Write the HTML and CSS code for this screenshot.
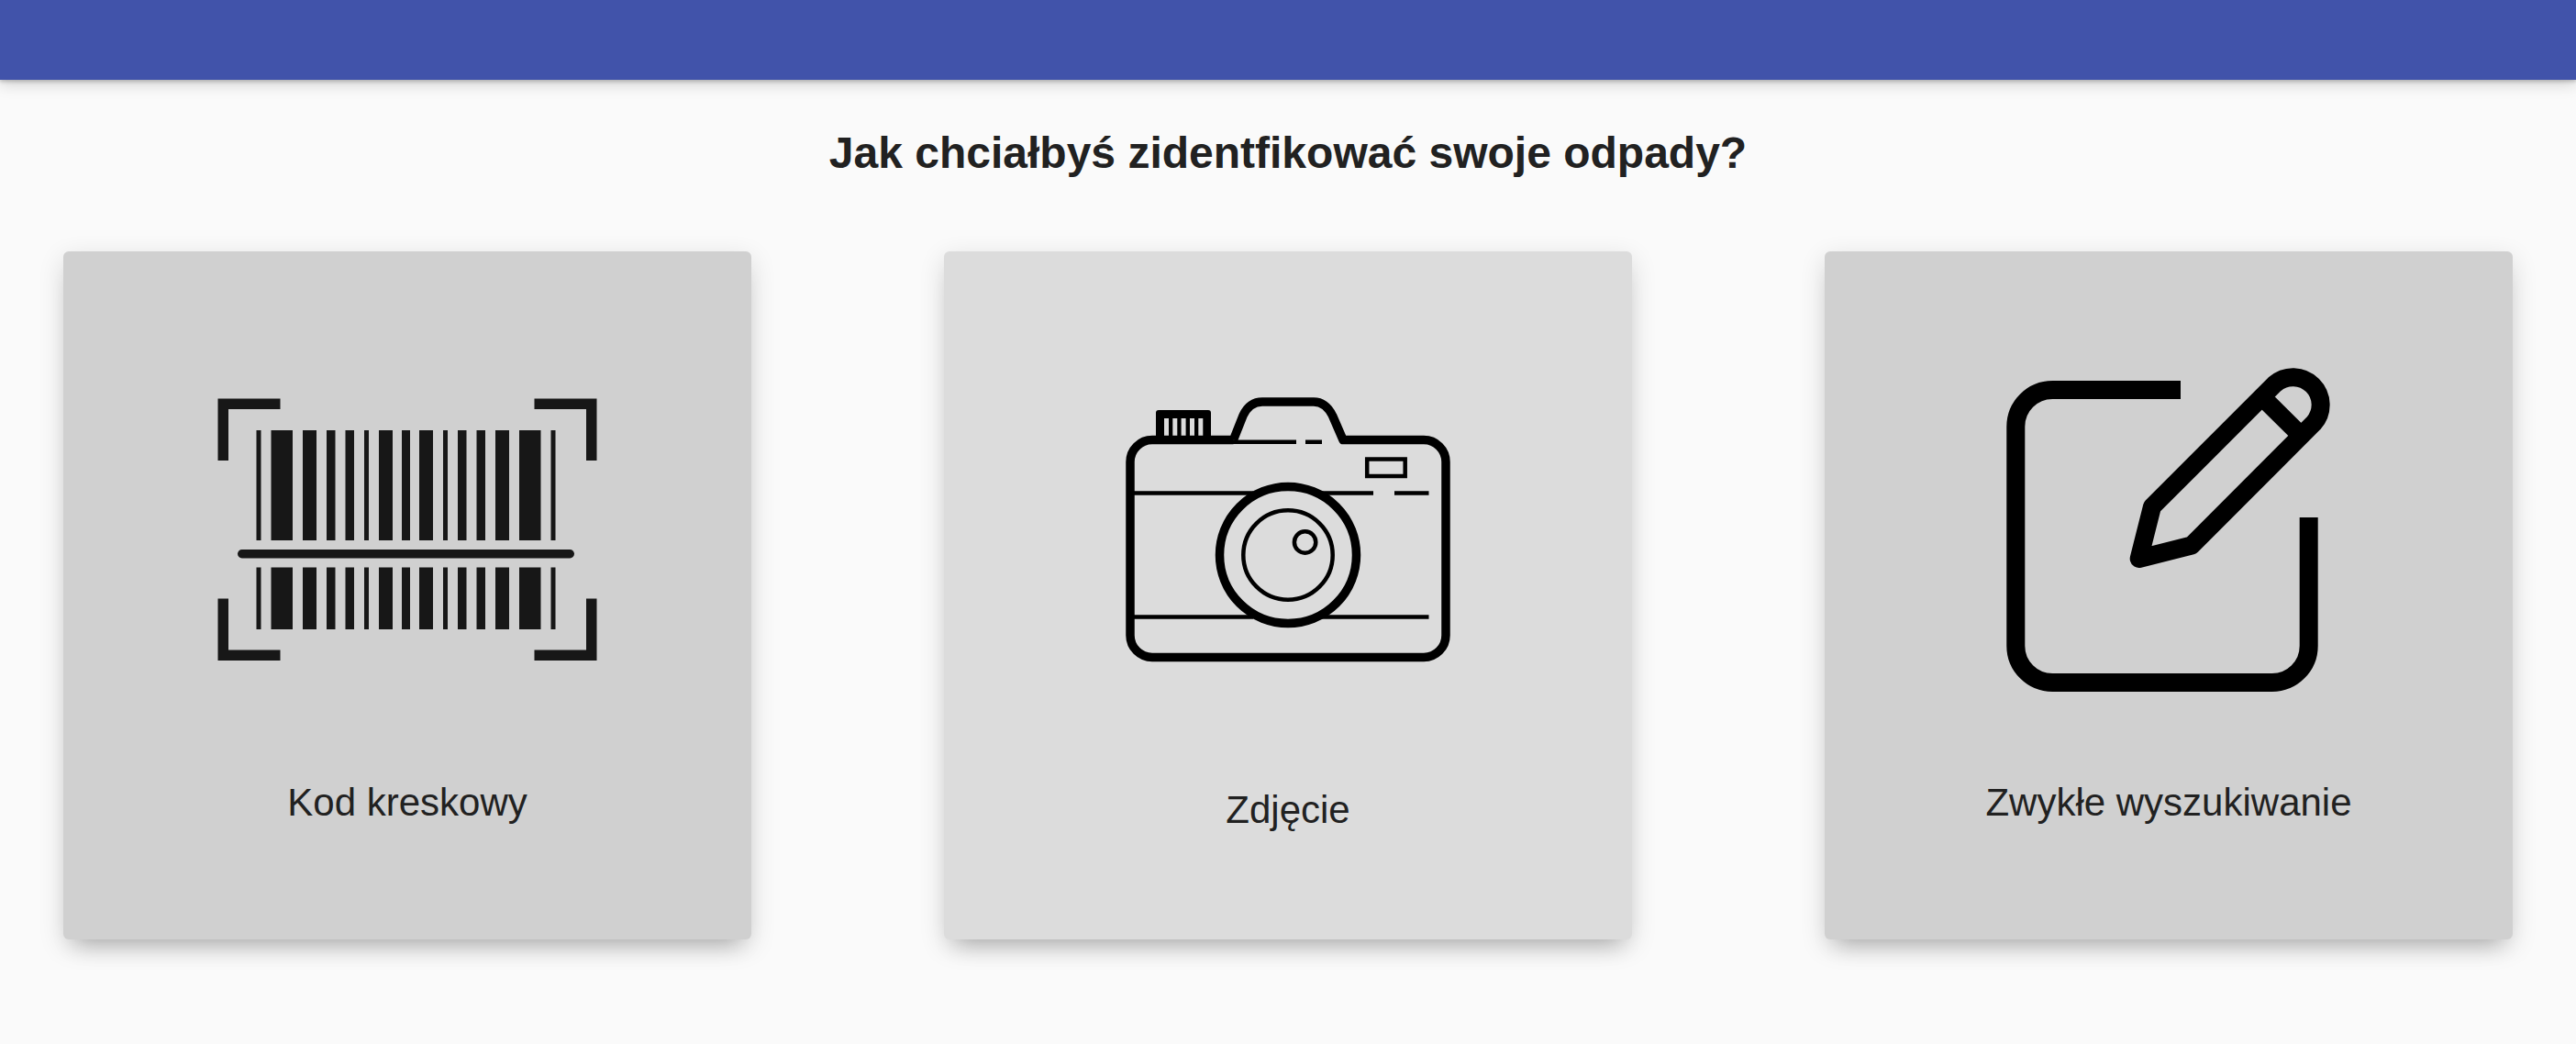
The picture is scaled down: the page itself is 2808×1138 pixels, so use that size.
FILE: index.html
```
<!DOCTYPE html>
<html lang="pl">
<head>
<meta charset="utf-8">
<meta name="viewport" content="width=device-width, initial-scale=1">
<title>Identyfikacja odpadów</title>
<link rel="stylesheet" href="styles.css">
</head>
<body>
<header class="app-bar"></header>
<main class="content">
  <h1 class="title">Jak chciałbyś zidentfikować swoje odpady?</h1>
  <div class="options">
    <button class="card" type="button">
      <svg class="icon" viewBox="234 398 420 360" aria-hidden="true" fill="#171717">
        <path d="M237.500 434.500H305.500V446H249V502H237.500ZM582.500 434.500H650.500V502H639V446H582.500ZM237.500 652.500H249V708.500H305.500V720H237.500ZM639 652.500H650.500V720H582.500V708.500H639Z"/>
        <path d="M279.500 469h5v120h-5zM295.500 469h23.500v120h-23.500zM330 469h15v120h-15zM356 469h9.500v120h-9.500zM376.500 469h9.500v120h-9.500zM397 469h5v120h-5zM413 469h15v120h-15zM438 469h9v120h-9zM457 469h15v120h-15zM483 469h5v120h-5zM499 469h9.500v120h-9.500zM519.500 469h9.500v120h-9.500zM540 469h15v120h-15zM566 469h23.500v120h-23.500zM600.500 469h5v120h-5z"/>
        <path d="M279.500 618.500h5v67.500h-5zM295.500 618.500h23.500v67.500h-23.500zM330 618.500h15v67.500h-15zM356 618.500h9.500v67.500h-9.500zM376.500 618.500h9.500v67.500h-9.500zM397 618.500h5v67.500h-5zM413 618.500h15v67.500h-15zM438 618.500h9v67.500h-9zM457 618.500h15v67.500h-15zM483 618.500h5v67.500h-5zM499 618.500h9.500v67.500h-9.500zM519.500 618.500h9.500v67.500h-9.500zM540 618.500h15v67.500h-15zM566 618.500h23.500v67.500h-23.500zM600.500 618.500h5v67.500h-5z"/>
        <rect x="259" y="599" width="367" height="9.500" rx="4.700"/>
      </svg>
      <span class="label">Kod kreskowy</span>
    </button>
    <button class="card card-active" type="button">
      <svg class="icon icon-tall" viewBox="1194 390 420 376" aria-hidden="true" fill="none" stroke="#000">
        <path stroke-width="9.500" stroke-linejoin="round" d="M1344.500 479.500H1256a24 24 0 0 0-24 24V692.500a24 24 0 0 0 24 24H1552a24 24 0 0 0 24-24V503.500a24 24 0 0 0-24-24H1464L1452.500 453Q1445 438 1432 438H1376Q1362 438 1355 453L1344.500 479.500"/>
        <path fill="#000" stroke="none" fill-rule="evenodd" d="M1263 447H1317q3 0 3 3V478H1260V450q0-3 3-3ZM1269 456v19h5v-19ZM1278.300 456v19h5v-19ZM1287.600 456v19h5v-19ZM1297 456v19h5v-19ZM1306.300 456v19h5v-19Z"/>
        <path stroke-width="4.500" d="M1344 481.700H1413M1423 481.700H1441M1236 537.500H1366M1436 537.500H1497M1520 537.500H1557.500M1236 672.500H1366M1436 672.500H1557.500M1490.200 500.500H1531.700V519H1490.200Z"/>
        <circle cx="1404" cy="605" r="74.500" stroke-width="9.500"/>
        <circle cx="1404" cy="605" r="48.700" stroke-width="4.500"/>
        <circle cx="1422.600" cy="591" r="11.700" stroke-width="4.500"/>
      </svg>
      <span class="label">Zdjęcie</span>
    </button>
    <button class="card" type="button">
      <svg class="icon" viewBox="2154 398 420 360" aria-hidden="true" fill="none" stroke="#000" stroke-width="20" stroke-linejoin="round">
        <path d="M2377 425H2237.300a40 40 0 0 0-40 40V704a40 40 0 0 0 40 40H2476.700a40 40 0 0 0 40-40V564"/>
        <path d="M2479.500 418.800a30.100 30.100 0 0 1 42.500 42.500L2389 594.500 2331.700 609 2346 552.300ZM2465.700 432.700 2508.500 475"/>
      </svg>
      <span class="label">Zwykłe wyszukiwanie</span>
    </button>
  </div>
</main>
</body>
</html>
```
FILE: styles.css
```
* {
  box-sizing: border-box;
}

body {
  margin: 0;
  background: #fafafa;
  color: #212121;
  font-family: "Liberation Sans", Arial, sans-serif;
}

.app-bar {
  height: 87px;
  background: #4153aa;
  box-shadow: 0 2px 4px rgba(0, 0, 0, 0.2), 0 4px 16px rgba(0, 0, 0, 0.18);
}

.content {
  padding: 52px 69px 64px;
}

.title {
  margin: 0 0 79px;
  font-size: 48px;
  line-height: 56px;
  font-weight: 700;
  text-align: center;
}

.options {
  display: grid;
  grid-template-columns: repeat(3, minmax(0, 1fr));
  gap: 210px;
}

.card {
  display: flex;
  flex-direction: column;
  align-items: center;
  justify-content: center;
  gap: 92px;
  aspect-ratio: 1;
  padding: 0;
  border: 0;
  border-radius: 6px;
  background: #d0d0d0;
  color: inherit;
  font-family: inherit;
  box-shadow: 0 18px 24px -14px rgba(0, 0, 0, 0.24), 0 8px 28px rgba(0, 0, 0, 0.14);
  cursor: pointer;
}

.card-active {
  background: #dcdcdc;
}

.icon {
  width: 420px;
  max-width: 100%;
  height: 360px;
}

.icon-tall {
  height: 376px;
}

.label {
  font-size: 42px;
  line-height: 50px;
}
```
